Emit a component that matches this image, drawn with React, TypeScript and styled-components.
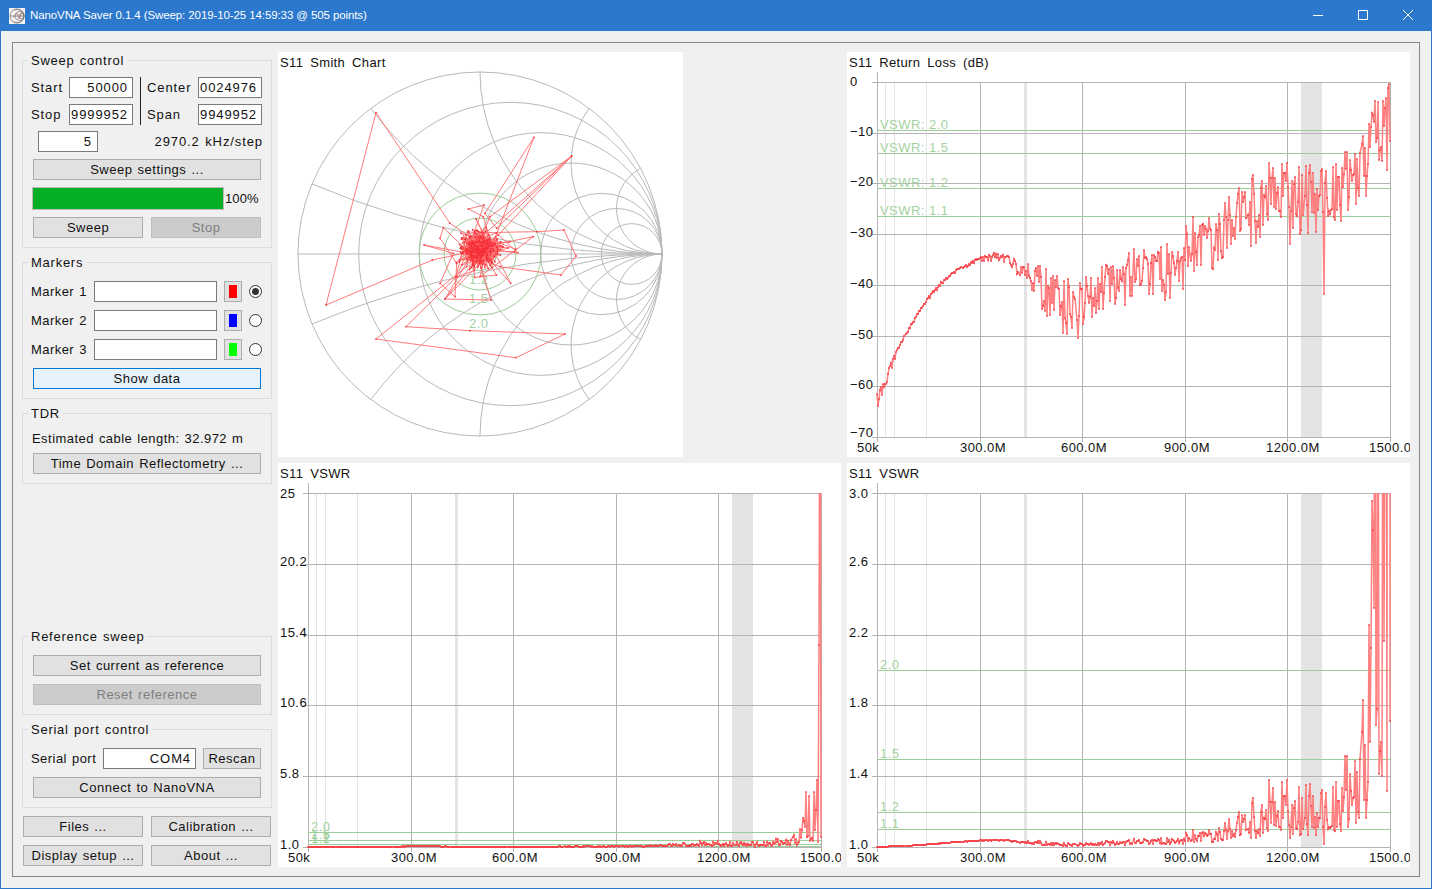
import React, { ReactElement } from 'react'
import styled, { createGlobalStyle } from 'styled-components'

const GlobalStyle = createGlobalStyle`
  html, body {
    margin: 0;
    padding: 0;
    background: #f0f0f0;
  }
  body {
    font-family: "Liberation Sans", Arial, sans-serif;
    font-size: 13px;
    color: #111;
  }
`

const Window = styled.div`
  width: 1432px;
  height: 889px;
  box-sizing: border-box;
  border: 1px solid #2b78cc;
  border-top: 0;
  display: flex;
  flex-direction: column;
  overflow: hidden;
`

const TitleBar = styled.div`
  height: 31px;
  flex: none;
  margin: 0 -1px;
  padding: 0 2px 0 9px;
  background: #2b78cc;
  color: #fff;
  display: flex;
  align-items: flex-start;
  font-size: 11.5px;
  letter-spacing: -0.1px;
  line-height: 31px;
`

const TitleIcon = styled.svg`
  margin-top: 8px;
  flex: none;
`

const TitleText = styled.span`
  margin-left: 5px;
  flex: 1;
`

const WindowButton = styled.div`
  width: 45px;
  height: 30px;
  display: flex;
  align-items: center;
  justify-content: center;
`

const Frame = styled.div`
  flex: 1;
  margin: 11px;
  border: 1px solid #828790;
  padding: 9px;
  display: flex;
  gap: 6px;
  min-height: 0;
`

const LeftColumn = styled.div`
  width: 250px;
  flex: none;
  display: flex;
  flex-direction: column;
  gap: 6px;
`

const Group = styled.fieldset<{ $top?: number; $pushDown?: boolean }>`
  margin: ${p => (p.$pushDown ? 'auto 0 0' : '0')};
  min-width: 0;
  border: 1px solid #dcdcdc;
  padding: ${p => p.$top ?? 11}px 9px 9px 8px;
`

const Legend = styled.legend`
  padding: 0 3px;
  margin-left: -3px;
  height: 16px;
  line-height: 18px;
  letter-spacing: 0.75px;
  word-spacing: 1px;
`

const Label = styled.span`
  line-height: 21px;
  letter-spacing: 0.45px;
  white-space: nowrap;
  word-spacing: 1px;
`

const FrequencyLabel = styled(Label)`
  letter-spacing: 0.9px;
`

const StepLabel = styled(Label)`
  letter-spacing: 0.9px;
`

const Field = styled.div`
  height: 21px;
  box-sizing: border-box;
  border: 1px solid #7a7a7a;
  background: #fff;
  display: flex;
  justify-content: flex-end;
  align-items: center;
  padding-right: 4px;
  overflow: hidden;
  white-space: nowrap;
  letter-spacing: 0.9px;
`

const FrequencyGrid = styled.div`
  display: grid;
  grid-template-columns: 38px 64px 14px 51px 64px;
  grid-auto-rows: 21px;
  row-gap: 6px;
`

const FrequencyDivider = styled.div`
  grid-column: 3;
  grid-row: 1 / span 2;
  justify-self: center;
  width: 1px;
  background: #222;
`

const StepRow = styled.div`
  margin-top: 6px;
  display: flex;
  justify-content: space-between;
  padding-left: 7px;
  margin-right: -1px;
`

const StepField = styled(Field)`
  width: 60px;
  padding-right: 5px;
`

const Button = styled.div<{ $kind?: 'disabled' | 'focus' }>`
  height: 21px;
  box-sizing: border-box;
  border: 1px solid ${p => (p.$kind === 'focus' ? '#0078d7' : p.$kind === 'disabled' ? '#bfbfbf' : '#adadad')};
  background: ${p => (p.$kind === 'focus' ? '#e5f1fb' : p.$kind === 'disabled' ? '#cccccc' : '#e1e1e1')};
  color: ${p => (p.$kind === 'disabled' ? '#7e7e7e' : '#111')};
  display: flex;
  align-items: center;
  justify-content: center;
  letter-spacing: 0.5px;
  word-spacing: 1px;
  white-space: nowrap;
`

const ButtonStack = styled.div<{ $top: number; $gap?: number }>`
  margin: ${p => p.$top}px 1px 0 2px;
  display: flex;
  flex-direction: column;
  gap: ${p => p.$gap ?? 8}px;
`

const ProgressRow = styled.div`
  margin: 7px -2px 0 1px;
  display: flex;
  align-items: center;
`

const ProgressTrack = styled.div`
  width: 192px;
  height: 23px;
  box-sizing: border-box;
  border: 1px solid #bcbcbc;
  background: #06b025;
  flex: none;
`

const ProgressLabel = styled.span`
  margin-left: 1px;
  letter-spacing: 0.1px;
`

const SplitButtons = styled.div`
  margin: 7px 1px 0 2px;
  display: grid;
  grid-template-columns: 110px 110px;
  column-gap: 8px;
`

const MarkerRow = styled.div`
  display: grid;
  grid-template-columns: 56px 123px 18px 13px;
  column-gap: 7px;
  align-items: center;
  margin-bottom: 8px;
`

const Swatch = styled.div<{ $color: string }>`
  height: 21px;
  box-sizing: border-box;
  border: 1px solid #adadad;
  background: #e1e1e1;
  padding: 3px 4px;
  &::after {
    content: '';
    display: block;
    height: 100%;
    background: ${p => p.$color};
  }
`

const Radio = styled.div<{ $on?: boolean }>`
  width: 13px;
  height: 13px;
  box-sizing: border-box;
  border: 1px solid #333;
  border-radius: 50%;
  background: #fff;
  display: flex;
  align-items: center;
  justify-content: center;
  &::after {
    content: '';
    display: ${p => (p.$on ? 'block' : 'none')};
    width: 7px;
    height: 7px;
    border-radius: 50%;
    background: #333;
  }
`

const TdrText = styled.div`
  line-height: 16px;
  margin: 10px 0 0 1px;
  letter-spacing: 0.45px;
  word-spacing: 1px;
  white-space: nowrap;
`

const SerialRow = styled.div`
  display: grid;
  grid-template-columns: 65px 93px 58px;
  column-gap: 7px;
`

const FooterButtons = styled.div`
  margin: 2px 0 1px 1px;
  display: grid;
  grid-template-columns: 120px 120px;
  gap: 8px;
`

const ChartGrid = styled.div`
  flex: 1;
  display: grid;
  grid-template-columns: 563px 563px;
  grid-template-rows: 405px 404px;
  gap: 6px;
`

const ChartPanel = styled.div<{ $width?: number }>`
  width: ${p => p.$width ?? 563}px;
  background: #fff;
  overflow: hidden;
`

const ChartTitle = styled.div`
  height: 18px;
  padding-left: 2px;
  line-height: 21px;
  letter-spacing: 0.35px;
  word-spacing: 3px;
`

const ChartSvg = styled.svg`
  display: block;
  font-family: "Liberation Sans", Arial, sans-serif;
  font-size: 13px;
  letter-spacing: 0.45px;
`

const rng = (seed: number) => () => {
  seed = (seed + 0x6d2b79f5) | 0
  let t = Math.imul(seed ^ (seed >>> 15), 1 | seed)
  t = (t + Math.imul(t ^ (t >>> 7), 61 | t)) ^ t
  return ((t ^ (t >>> 14)) >>> 0) / 4294967296
}

const lerp = (table: number[][], x: number) => {
  for (let i = 1; i < table.length; i++) {
    if (x <= table[i][0]) {
      const [x0, y0] = table[i - 1]
      const [x1, y1] = table[i]
      return y0 + ((y1 - y0) * (x - x0)) / (x1 - x0)
    }
  }
  return table[table.length - 1][1]
}

// upper edge of the return loss trace, in pixels below the 0 dB line
const envelope = [
  [0, 312], [8, 297], [18, 272], [34, 241], [51, 215], [68, 196], [84, 185], [101, 176], [118, 171], [134, 174],
  [151, 180], [168, 186], [184, 196], [201, 199], [218, 189], [234, 178], [268, 168], [300, 162], [308, 142],
  [340, 132], [373, 95], [396, 85], [423, 90], [456, 78], [473, 62], [489, 50], [496, 25], [510, 3], [513, 3],
]
const spread = [
  [0, 14], [14, 12], [20, 3], [100, 3], [125, 10], [150, 22], [170, 50], [200, 58], [230, 45], [300, 55], [400, 68], [513, 70],
]

const makeSweep = () => {
  const random = rng(1019)
  const points: number[] = []
  for (let i = 0; i < 505; i++) {
    const x = (i * 513) / 504
    const jitter = x > 225 ? random() * 14 - 7 : 0
    const r = random()
    points.push(Math.round(lerp(envelope, x) + jitter + lerp(spread, x) * Math.pow(r, 1.5)))
  }
  points[439] = 212
  points[500] = 16
  points[501] = 88
  points[502] = 6
  points[503] = 2
  points[504] = 59
  return points
}

const sweep = makeSweep()
const PX_PER_DB = 5.07
const sweepVswr = sweep.map(y => {
  const g = Math.pow(10, -(y / PX_PER_DB) / 20)
  return (1 + g) / (1 - g)
})

const GRID = '#b4b4b4'
const MINOR = '#e4e4e4'
const BAND = '#e4e4e4'
const GREEN = '#9ccd96'
const GREEN_TEXT = '#a4d29f'
const TRACE = '#ff8080'
const DOT = '#f5303a'
const AXIS_X = [0, 103, 205, 308, 410, 513]
const AXIS_LABELS = ['50k', '300.0M', '600.0M', '900.0M', '1200.0M', '1500.0M']

type Tick = { y: number; label: string; labelY?: number }
type Limit = { y: number; label: string }

const SweepChart = ({ id, title, height, top, bottom, ticks, limits, values, tickX, tickShift }: {
  id: string
  title: string
  height: number
  top: number
  bottom: number
  ticks: Tick[]
  limits: Limit[]
  values: number[]
  tickX: number
  tickShift: number
}): ReactElement => {
  const left = 30
  const right = 543
  const trace = values.map((y, i) => [left + Math.round((i * 513) / 504), Math.round(y)])
  return (
    <ChartPanel>
      <ChartTitle>{title}</ChartTitle>
      <ChartSvg width={563} height={height - 18} viewBox={`0 18 563 ${height - 18}`}>
        <clipPath id={id}>
          <rect x={left - 2} y={top} width={516} height={bottom - top + 2} />
        </clipPath>
        <g shapeRendering='crispEdges'>
          <rect x={left + 147} y={top} width={3} height={bottom - top} fill={BAND} />
          <rect x={left + 424} y={top} width={21} height={bottom - top} fill={BAND} />
          {[8, 17, 49].map(x => (
            <line key={x} x1={left + x} x2={left + x} y1={top} y2={bottom} stroke={MINOR} />
          ))}
          {AXIS_X.map(x => (
            <line key={x} x1={left + x} x2={left + x} y1={x === 0 ? top - 10 : top} y2={bottom + 5} stroke={GRID} />
          ))}
          {ticks.map(t => (
            <line key={t.label} x1={left - 5} x2={right} y1={t.y} y2={t.y} stroke={GRID} />
          ))}
          {limits.map(l => (
            <line key={l.label} x1={left} x2={right} y1={l.y} y2={l.y} stroke={GREEN} />
          ))}
        </g>
        {limits.map(l => (
          <text key={l.label} x={left + 3} y={l.y - 1} fill={GREEN_TEXT}>{l.label}</text>
        ))}
        {ticks.map(t => (
          <text key={t.label} x={tickX} y={t.labelY ?? t.y + tickShift} fill='#111'>{t.label}</text>
        ))}
        {AXIS_LABELS.map((label, i) => (
          <text key={label} x={left + AXIS_X[i] - (i === 0 || i === 1 ? 20 : 21)} y={bottom + 15} fill='#111'>{label}</text>
        ))}
        <g clipPath={`url(#${id})`}>
          <polyline points={trace.map(p => p.join(',')).join(' ')} fill='none' stroke={TRACE} strokeWidth={1.5} />
          <g fill={DOT}>
            {trace.map(([x, y], i) => (
              <rect key={i} x={x - 0.75} y={y - 0.75} width={1.5} height={1.5} />
            ))}
          </g>
        </g>
      </ChartSvg>
    </ChartPanel>
  )
}

// Smith chart geometry, panel coordinates
const CX = 202
const CY = 202
const R = 182

const makeSmithTrace = () => {
  const random = rng(77)
  const z = (x: number, y: number) => [2 + x / 3, y / 3 - 2]
  const cloud = (n: number, sd: number) => {
    const out: number[][] = []
    for (let i = 0; i < n; i++) {
      const a = random() * Math.PI * 2
      const d = sd * Math.sqrt(-2 * Math.log(1 - random() * 0.98))
      out.push(z(600 + Math.cos(a) * d, 600 + Math.sin(a) * d * 0.95))
    }
    return out
  }
  const hand = (list: number[][]) => list.map(([x, y]) => z(x, y))
  return [
    ...cloud(260, 24),
    ...hand([[457, 630], [138, 765], [288, 188], [510, 520], [570, 560]]),
    ...cloud(40, 30),
    ...hand([[762, 262], [615, 490], [650, 535], [875, 318], [630, 500], [605, 560], [875, 318], [655, 555]]),
    ...cloud(30, 32),
    ...hand([[600, 548], [770, 545], [852, 540], [888, 618], [843, 675], [660, 650]]),
    ...cloud(30, 34),
    ...hand([[560, 650], [288, 867], [708, 923], [855, 852], [570, 842], [378, 830], [530, 680]]),
    ...cloud(30, 38),
    ...hand([[495, 747], [633, 750], [600, 640], [495, 747], [580, 640]]),
    ...cloud(20, 42),
    ...hand([[612, 465], [565, 477], [610, 500], [640, 600], [692, 700], [620, 620], [432, 585], [520, 610], [480, 700], [525, 740], [530, 640], [480, 565], [490, 533], [560, 600], [760, 560], [600, 680]]),
    ...cloud(60, 28),
  ]
}

const smithTrace = makeSmithTrace()

const reactanceArc = (x: number, sign: number) => {
  const d = x * x + 1
  const ex = CX + R * ((x * x - 1) / d)
  const ey = CY - sign * R * ((2 * x) / d)
  return `M${CX + R} ${CY} A${R / x} ${R / x} 0 0 ${sign > 0 ? 1 : 0} ${ex} ${ey}`
}

const SmithChart = (): ReactElement => (
  <ChartPanel $width={405}>
    <ChartTitle>S11 Smith Chart</ChartTitle>
    <ChartSvg width={405} height={387} viewBox='0 18 405 387'>
      <g fill='none' stroke='#b9b9b9'>
        <circle cx={CX} cy={CY} r={R} />
        <line x1={CX - R} x2={CX + R} y1={CY} y2={CY} />
        {[0.2, 0.5, 1, 2, 3, 5].map(r => (
          <circle key={r} cx={CX + R - R / (r + 1)} cy={CY} r={R / (r + 1)} />
        ))}
        {[0.2, 0.5, 1, 2, 4].flatMap(x => [
          <path key={`u${x}`} d={reactanceArc(x, 1)} />,
          <path key={`d${x}`} d={reactanceArc(x, -1)} />,
        ])}
      </g>
      <g fill='none' stroke={GREEN}>
        {[61, 36, 16.5, 8.7].map(r => (
          <circle key={r} cx={CX} cy={CY} r={r} />
        ))}
      </g>
      <text x={CX - 11} y={CY + 74} fill={GREEN_TEXT}>2.0</text>
      <text x={CX - 11} y={CY + 49} fill={GREEN_TEXT}>1.5</text>
      <text x={CX - 11} y={CY + 30} fill={GREEN_TEXT}>1.2</text>
      <polyline points={smithTrace.map(p => p.join(',')).join(' ')} fill='none' stroke='#ff6a6a' strokeWidth={0.9} />
      <g fill={DOT}>
        {smithTrace.map(([x, y], i) => (
          <rect key={i} x={x - 0.75} y={y - 0.75} width={1.5} height={1.5} />
        ))}
      </g>
    </ChartSvg>
  </ChartPanel>
)

const AppIcon = (): ReactElement => (
  <TitleIcon width={16} height={16} viewBox='0 0 16 16'>
    <rect width={16} height={16} fill='#f4f4f4' />
    <g fill='none' stroke='#777' strokeWidth={0.8}>
      <circle cx={8} cy={8} r={7} />
      <circle cx={10.5} cy={8} r={4.5} />
      <circle cx={12.5} cy={8} r={2.5} />
      <path d='M1 8h14M15 8A7 7 0 0 0 5 2M15 8A7 7 0 0 1 5 14' />
    </g>
    <path d='M4 10l4-5 2 6 3-7' fill='none' stroke='#b77' strokeWidth={0.8} />
  </TitleIcon>
)

const vswrScaleLeft = (v: number) => 384 - ((v - 1) / 24) * 354
const vswrScaleRight = (v: number) => 384 - ((v - 1) / 2) * 354

const App = (): ReactElement => (
  <Window>
    <GlobalStyle />
    <TitleBar>
      <AppIcon />
      <TitleText>NanoVNA Saver 0.1.4 (Sweep: 2019-10-25 14:59:33 @ 505 points)</TitleText>
      <WindowButton>
        <svg width={10} height={10} viewBox='0 0 10 10'><path d='M0 5.5h10' stroke='#fff' /></svg>
      </WindowButton>
      <WindowButton>
        <svg width={10} height={10} viewBox='0 0 10 10'><rect x={0.5} y={0.5} width={9} height={9} fill='none' stroke='#fff' /></svg>
      </WindowButton>
      <WindowButton>
        <svg width={10} height={10} viewBox='0 0 10 10'><path d='M0 0l10 10M10 0L0 10' stroke='#fff' /></svg>
      </WindowButton>
    </TitleBar>
    <Frame>
      <LeftColumn>
        <Group $top={9}>
          <Legend>Sweep control</Legend>
          <FrequencyGrid>
            <FrequencyLabel>Start</FrequencyLabel>
            <Field>50000</Field>
            <FrequencyDivider />
            <FrequencyLabel>Center</FrequencyLabel>
            <Field>750024976</Field>
            <FrequencyLabel>Stop</FrequencyLabel>
            <Field>1499999952</Field>
            <FrequencyLabel>Span</FrequencyLabel>
            <Field>1499949952</Field>
          </FrequencyGrid>
          <StepRow>
            <StepField>5</StepField>
            <StepLabel>2970.2 kHz/step</StepLabel>
          </StepRow>
          <ButtonStack $top={7}>
            <Button>Sweep settings ...</Button>
          </ButtonStack>
          <ProgressRow>
            <ProgressTrack />
            <ProgressLabel>100%</ProgressLabel>
          </ProgressRow>
          <SplitButtons>
            <Button>Sweep</Button>
            <Button $kind='disabled'>Stop</Button>
          </SplitButtons>
        </Group>
        <Group>
          <Legend>Markers</Legend>
          <MarkerRow>
            <Label>Marker 1</Label>
            <Field />
            <Swatch $color='#ff0000' />
            <Radio $on />
          </MarkerRow>
          <MarkerRow>
            <Label>Marker 2</Label>
            <Field />
            <Swatch $color='#0000ff' />
            <Radio />
          </MarkerRow>
          <MarkerRow>
            <Label>Marker 3</Label>
            <Field />
            <Swatch $color='#00ff00' />
            <Radio />
          </MarkerRow>
          <ButtonStack $top={0}>
            <Button $kind='focus'>Show data</Button>
          </ButtonStack>
        </Group>
        <Group $top={0}>
          <Legend>TDR</Legend>
          <TdrText>Estimated cable length: 32.972 m</TdrText>
          <ButtonStack $top={6}>
            <Button>Time Domain Reflectometry ...</Button>
          </ButtonStack>
        </Group>
        <Group $pushDown>
          <Legend>Reference sweep</Legend>
          <ButtonStack $top={0}>
            <Button>Set current as reference</Button>
            <Button $kind='disabled'>Reset reference</Button>
          </ButtonStack>
        </Group>
        <Group>
          <Legend>Serial port control</Legend>
          <SerialRow>
            <Label>Serial port</Label>
            <Field>COM4</Field>
            <Button>Rescan</Button>
          </SerialRow>
          <ButtonStack $top={8}>
            <Button>Connect to NanoVNA</Button>
          </ButtonStack>
        </Group>
        <FooterButtons>
          <Button>Files ...</Button>
          <Button>Calibration ...</Button>
          <Button>Display setup ...</Button>
          <Button>About ...</Button>
        </FooterButtons>
      </LeftColumn>
      <ChartGrid>
        <SmithChart />
        <SweepChart
          id='returnLoss'
          title='S11 Return Loss (dB)'
          height={405}
          top={30}
          bottom={385}
          tickX={3}
          tickShift={3}
          ticks={[
            { y: 30, label: '0', labelY: 34 },
            { y: 81, label: '−10' },
            { y: 131, label: '−20' },
            { y: 182, label: '−30' },
            { y: 233, label: '−40' },
            { y: 284, label: '−50' },
            { y: 334, label: '−60' },
            { y: 385, label: '−70', labelY: 385 },
          ]}
          limits={[
            { y: 78, label: 'VSWR: 2.0' },
            { y: 101, label: 'VSWR: 1.5' },
            { y: 136, label: 'VSWR: 1.2' },
            { y: 164, label: 'VSWR: 1.1' },
          ]}
          values={sweep.map(y => y + 30)}
        />
        <SweepChart
          id='vswrFull'
          title='S11 VSWR'
          height={404}
          top={30}
          bottom={384}
          tickX={2}
          tickShift={2}
          ticks={[
            { y: 30, label: '25', labelY: 35 },
            { y: 101, label: '20.2' },
            { y: 172, label: '15.4' },
            { y: 242, label: '10.6' },
            { y: 313, label: '5.8' },
            { y: 384, label: '1.0', labelY: 386 },
          ]}
          limits={[
            { y: 369, label: '2.0' },
            { y: 377, label: '1.5' },
            { y: 381, label: '1.2' },
            { y: 383, label: '1.1' },
          ]}
          values={sweepVswr.map(vswrScaleLeft)}
        />
        <SweepChart
          id='vswrZoom'
          title='S11 VSWR'
          height={404}
          top={30}
          bottom={384}
          tickX={2}
          tickShift={2}
          ticks={[
            { y: 30, label: '3.0', labelY: 35 },
            { y: 101, label: '2.6' },
            { y: 172, label: '2.2' },
            { y: 242, label: '1.8' },
            { y: 313, label: '1.4' },
            { y: 384, label: '1.0', labelY: 386 },
          ]}
          limits={[
            { y: 207, label: '2.0' },
            { y: 296, label: '1.5' },
            { y: 349, label: '1.2' },
            { y: 366, label: '1.1' },
          ]}
          values={sweepVswr.map(vswrScaleRight)}
        />
      </ChartGrid>
    </Frame>
  </Window>
)

export default App
